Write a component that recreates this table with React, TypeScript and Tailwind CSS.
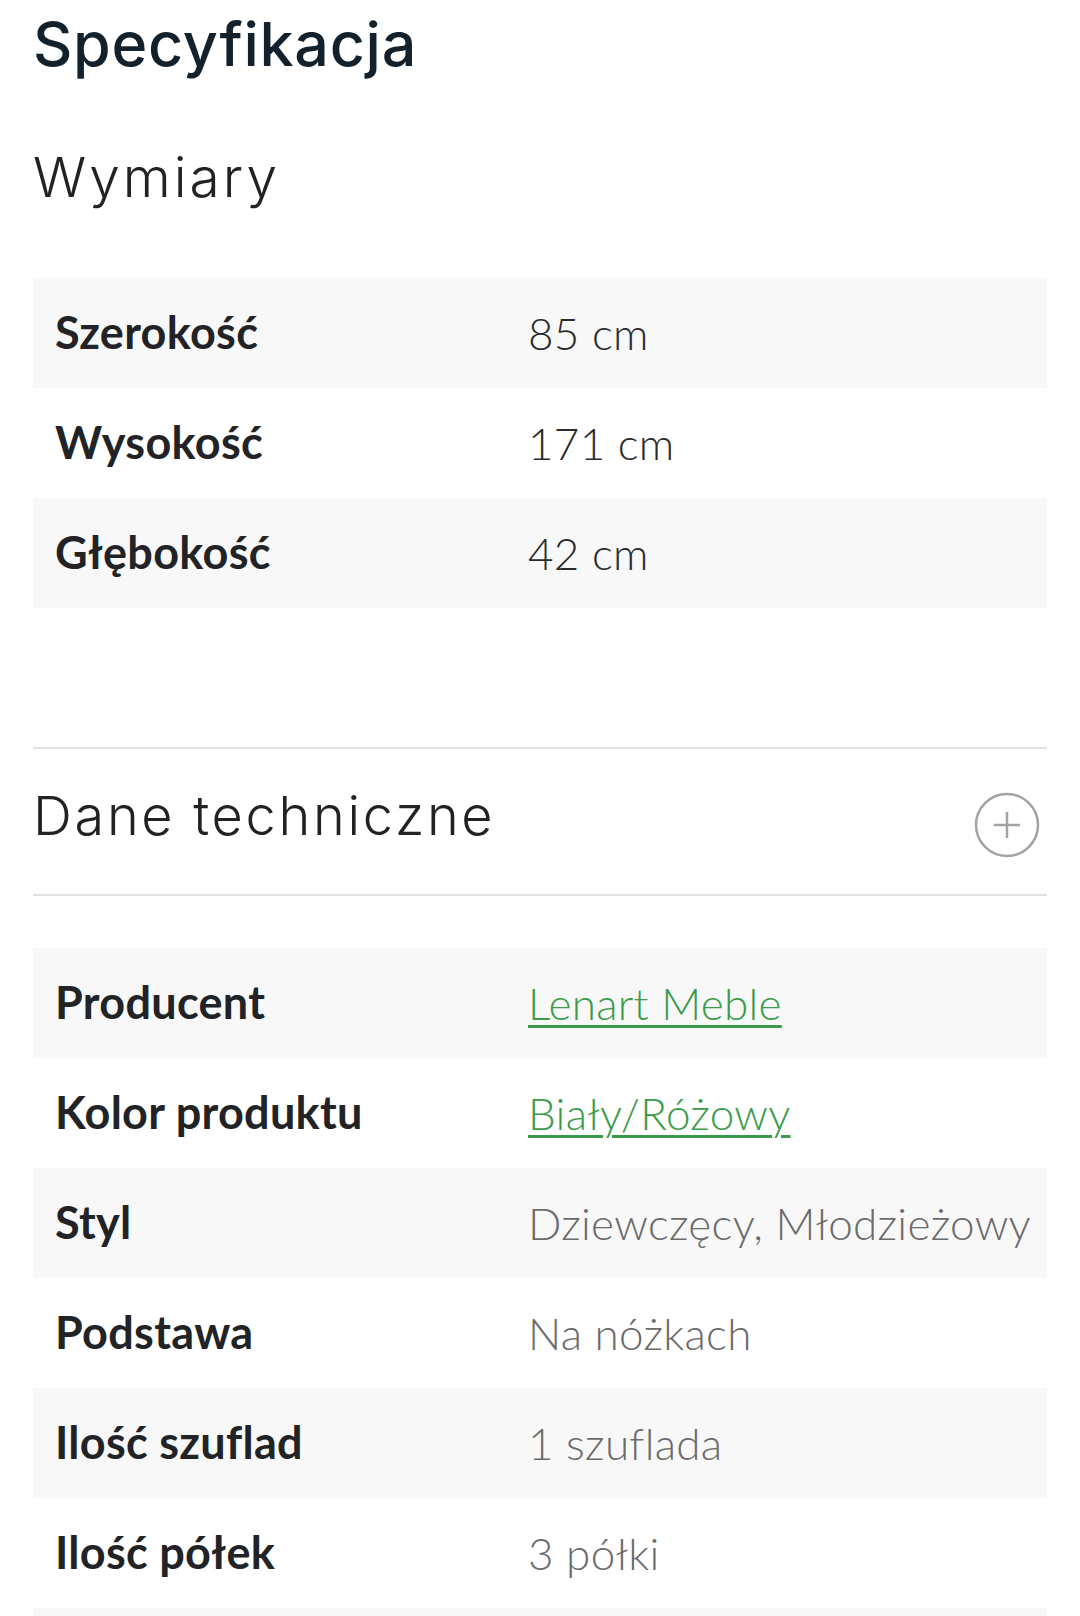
import React from "react";

type Row = { label: string; value: string; link?: boolean };

const dimensions: Row[] = [
  { label: "Szerokość", value: "85 cm" },
  { label: "Wysokość", value: "171 cm" },
  { label: "Głębokość", value: "42 cm" },
];

const technical: Row[] = [
  { label: "Producent", value: "Lenart Meble", link: true },
  { label: "Kolor produktu", value: "Biały/Różowy", link: true },
  { label: "Styl", value: "Dziewczęcy, Młodzieżowy" },
  { label: "Podstawa", value: "Na nóżkach" },
  { label: "Ilość szuflad", value: "1 szuflada" },
  { label: "Ilość półek", value: "3 półki" },
];

function SpecTable({ rows, muted }: { rows: Row[]; muted?: boolean }) {
  return (
    <div className="flex flex-col">
      {rows.map((row, i) => (
        <div
          key={row.label}
          className={`flex items-center h-[110px] ${i % 2 === 0 ? "bg-[#f8f8f8]" : "bg-white"}`}
        >
          <div className="w-[495px] shrink-0 pl-[22px] text-[45px] tracking-[0.3px] font-bold text-[#222326]">
            {row.label}
          </div>
          {row.link ? (
            <a
              href="#"
              className="text-[44px] font-light tracking-[0.3px] text-[#3a9c4a] underline decoration-[3px] underline-offset-[5px]"
            >
              {row.value}
            </a>
          ) : (
            <div
              className={`text-[44px] font-light tracking-[0.3px] whitespace-nowrap ${muted ? "text-[#6b6b6b]" : "text-[#2b2b2b]"}`}
            >
              {row.value}
            </div>
          )}
        </div>
      ))}
    </div>
  );
}

export default function App() {
  return (
    <div
      className="w-[1080px] h-[1616px] overflow-hidden bg-white px-[33px]"
      style={{ fontFamily: "Lato, 'Noto Sans', sans-serif" }}
    >
      <h1
        className="pt-[4px] text-[61px] leading-[80px] font-medium tracking-[0.7px] text-[#13212d]"
        style={{ fontFamily: "Inter, sans-serif" }}
      >
        Specyfikacja
      </h1>

      <h2
        className="mt-[58px] text-[55px] leading-[70px] font-light tracking-[3px] text-[#222]"
        style={{ fontFamily: "Inter, sans-serif" }}
      >
        Wymiary
      </h2>

      <div className="mt-[66px]">
        <SpecTable rows={dimensions} />
      </div>

      <div className="mt-[139px] border-t-2 border-b-2 border-[#e2e2e2] h-[149px] flex items-center justify-between">
        <h2
          className="text-[54px] font-light tracking-[2.7px] text-[#222] -mt-[12px]"
          style={{ fontFamily: "Inter, sans-serif" }}
        >
          Dane techniczne
        </h2>
        <svg width="66" height="66" viewBox="0 0 66 66" className="mr-[7px] mt-[6px]">
          <circle cx="33" cy="33" r="31" fill="none" stroke="#a3a3a3" strokeWidth="2.5" />
          <path d="M33 20v26M20 33h26" stroke="#a3a3a3" strokeWidth="2.5" />
        </svg>
      </div>

      <div className="mt-[52px]">
        <SpecTable rows={technical} muted />
        <div className="h-[110px] bg-[#f8f8f8]" />
      </div>
    </div>
  );
}
